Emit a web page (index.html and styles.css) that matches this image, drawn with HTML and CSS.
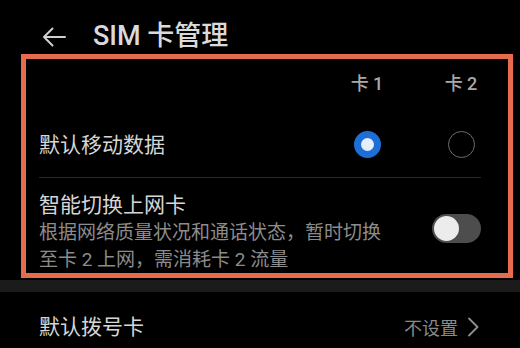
FILE: index.html
```html
<!DOCTYPE html>
<html lang="zh-CN">
<head>
<meta charset="utf-8">
<link rel="stylesheet" href="styles.css">
</head>
<body>
<header class="topbar">
  <svg class="back" width="24" height="20" viewBox="0 0 24 20"><path d="M23 10H2M10.5 1.5L2 10l8.5 8.5" fill="none" stroke="#cfcfcf" stroke-width="2" stroke-linecap="round" stroke-linejoin="round"/></svg>
  <h1 class="title">SIM 卡管理</h1>
</header>
<section class="box">
  <div class="grid">
    <div></div>
    <div class="colhead">卡 1</div>
    <div class="colhead">卡 2</div>
    <div class="label data">默认移动数据</div>
    <div class="cell data"><span class="radio on"></span></div>
    <div class="cell data"><span class="radio"></span></div>
  </div>
  <div class="divider"></div>
  <div class="smart">
    <div class="smart-text">
      <div class="label">智能切换上网卡</div>
      <div class="sub">根据网络质量状况和通话状态，暂时切换至卡 2 上网，需消耗卡 2 流量</div>
    </div>
    <span class="toggle"><span class="knob"></span></span>
  </div>
</section>
<div class="strip"></div>
<div class="row">
  <div class="label">默认拨号卡</div>
  <div class="value">不设置
    <svg width="12" height="20" viewBox="0 0 12 20"><path d="M2 1.5l8.5 8.5L2 18.5" fill="none" stroke="#8f8f8f" stroke-width="1.8" stroke-linecap="round" stroke-linejoin="round"/></svg>
  </div>
</div>
</body>
</html>
```
FILE: styles.css
```css
html, body {
  margin: 0;
  background: #000;
  font-family: Roboto, "Noto Sans CJK SC", sans-serif;
  color: #d9d9d9;
}
.topbar {
  height: 54px;
  display: flex;
  align-items: center;
  padding-left: 42px;
  padding-top: 18px;
  box-sizing: border-box;
}
.back { display: block; margin-top: 1px; }
.title {
  margin: 0 0 0 27px;
  font-size: 27px;
  font-weight: 500;
  line-height: 34px;
  color: #dadada;
}
.box {
  margin: 0 7px 0 21px;
  border: 5px solid #e66b4e;
  padding: 0 27px 0 13px;
}
.grid {
  display: grid;
  grid-template-columns: 1fr 40px 40px;
  column-gap: 54px;
}
.colhead {
  padding-top: 14px;
  height: 22px;
  line-height: 22px;
  font-size: 18px;
  font-weight: 500;
  color: #a9a9a9;
  text-align: center;
  white-space: nowrap;
}
.label {
  font-size: 21px;
  line-height: 28px;
  color: #d6d6d6;
}
.data {
  padding-top: 36px;
  padding-bottom: 18px;
}
.cell {
  display: flex;
  justify-content: center;
  align-items: center;
  height: 28px;
}
.radio {
  width: 27px;
  height: 27px;
  border-radius: 50%;
  border: 1.5px solid #6e6e6e;
  box-sizing: border-box;
  margin-top: -2px;
}
.radio.on {
  border: 7px solid #1d6fd8;
  background: #e6eef8;
}
.divider {
  height: 1px;
  background: #2a2a2a;
}
.smart {
  display: flex;
  align-items: center;
  padding-top: 13px;
}
.smart-text { width: 352px; }
.smart .sub {
  font-size: 19px;
  line-height: 27px;
  color: #8c8c8c;
}
.toggle {
  margin-left: auto;
  width: 49px;
  height: 29px;
  border-radius: 15px;
  background: #4d4d4d;
  display: flex;
  align-items: center;
  padding-left: 2px;
  box-sizing: border-box;
  margin-top: -8px;
}
.knob {
  width: 25px;
  height: 25px;
  border-radius: 50%;
  background: #ececec;
}
.strip {
  margin-top: 2px;
  height: 12px;
  background: #1b1b1b;
}
.row {
  display: flex;
  align-items: center;
  justify-content: space-between;
  padding: 21px 41px 0 39px;
}
.value {
  display: flex;
  align-items: center;
  gap: 9px;
  font-size: 18px;
  color: #8a8a8a;
}
.value svg { display: block; }
```
